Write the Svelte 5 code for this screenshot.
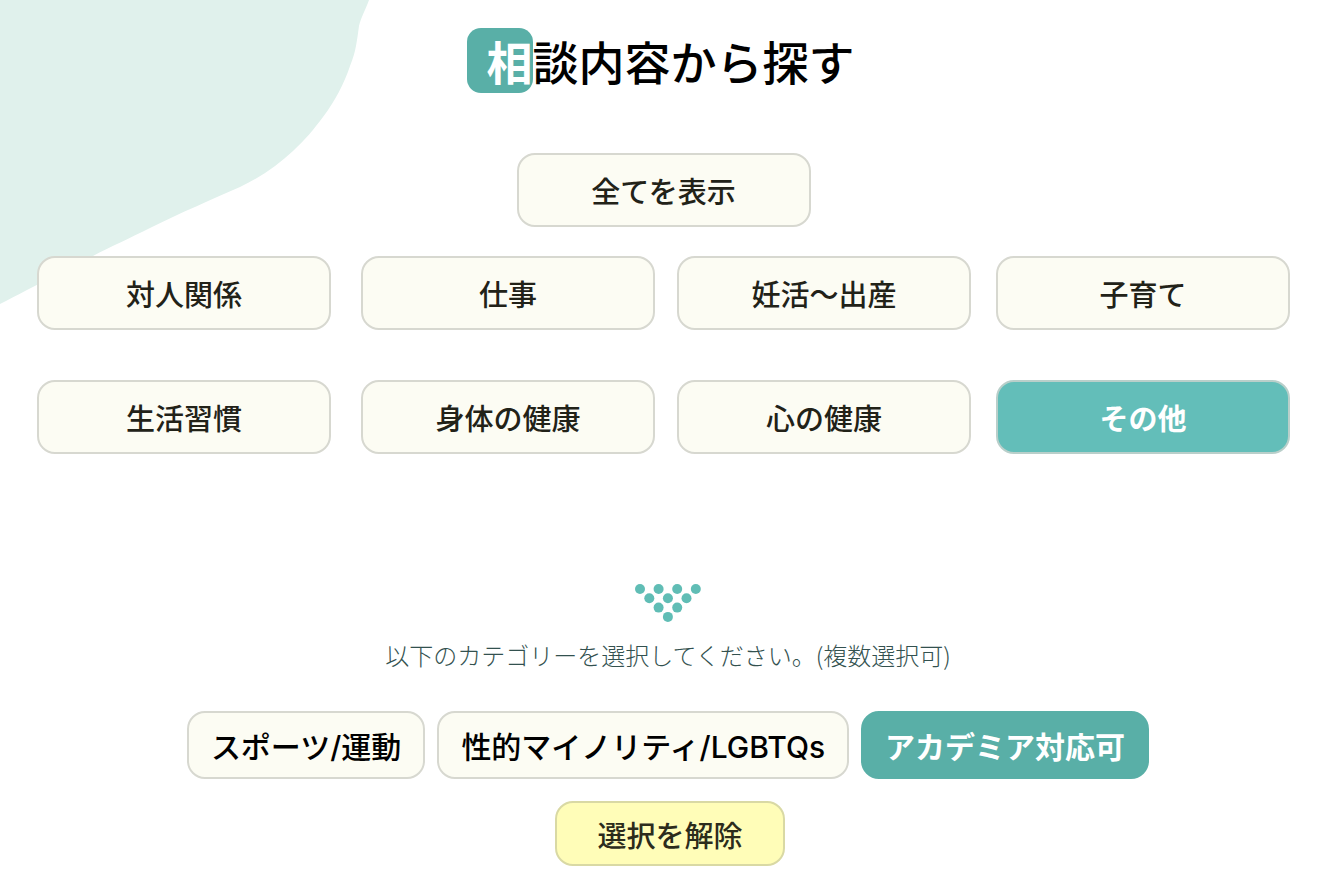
<script>
    let categories = [
        "対人関係",
        "仕事",
        "妊活～出産",
        "子育て",
        "生活習慣",
        "身体の健康",
        "心の健康",
        "その他",
    ];
    let tags = ["スポーツ/運動", "性的マイノリティ/LGBTQs", "アカデミア対応可"];

    let selected = "その他";
    let checked = ["アカデミア対応可"];

    // rows of the dotted arrow, from top to bottom
    let dots = [4, 3, 2, 1].flatMap((count, row) =>
        Array.from({ length: count }, (_, i) => ({
            x: 5 + row * 9.3 + i * 18.6,
            y: 6 + row * 9.3,
        }))
    );

    function toggleTag(tag) {
        checked = checked.includes(tag)
            ? checked.filter((t) => t !== tag)
            : [...checked, tag];
    }
</script>

<main lang="ja">
    <svg class="blob" width="370" height="304" viewBox="0 0 370 304" aria-hidden="true">
        <path
            d="M0 0H369C366 9 361 17 359 26C357 40 356 52 350 66C344 84 335 101 323 117C314 129 305 140 293 151C278 165 261 177 240 187C213 199 180 213 150 228C130 238 110 247 93 256C70 268 35 286 0 304Z"
        />
    </svg>

    <section class="search">
        <h1><span class="initial">相</span>談内容から探す</h1>
        <button
            class="category"
            class:active={selected == "all"}
            aria-pressed={selected == "all"}
            on:click={() => (selected = "all")}>全てを表示</button
        >
        <div class="categories">
            {#each categories as category}
                <button
                    class="category"
                    class:active={selected == category}
                    aria-pressed={selected == category}
                    on:click={() => (selected = category)}>{category}</button
                >
            {/each}
        </div>
    </section>

    <section class="detail">
        <svg class="arrow" width="66" height="40" viewBox="0 0 66 40" aria-hidden="true">
            {#each dots as dot}
                <circle cx={dot.x} cy={dot.y} r="5" />
            {/each}
        </svg>
        <p>以下のカテゴリーを選択してください。(複数選択可)</p>
        <div class="tags">
            {#each tags as tag}
                <button
                    class="tag"
                    class:checked={checked.includes(tag)}
                    aria-pressed={checked.includes(tag)}
                    on:click={() => toggleTag(tag)}>{tag}</button
                >
            {/each}
        </div>
        <button class="clear" on:click={() => (checked = [])}>選択を解除</button>
    </section>
</main>

<style>
    :global(body) {
        margin: 0;
        background: #fff;
    }

    main {
        position: relative;
        font-family: "Noto Sans CJK JP", sans-serif;
        color: #000;
        padding-bottom: 28px;
    }

    .blob {
        position: absolute;
        top: 0;
        left: 0;
        fill: #e0f1ec;
    }

    .search {
        position: relative;
        display: flex;
        flex-direction: column;
        align-items: center;
        padding: 28px 46px 0 37px;
    }

    h1 {
        display: flex;
        align-items: center;
        margin: 0 6px 60px 0;
        font-size: 46px;
        line-height: 65px;
        font-weight: 500;
    }

    .initial {
        padding-left: 20px;
        border-radius: 14px;
        background: #59afa7;
        color: #fff;
        font-weight: 700;
    }

    button {
        box-sizing: border-box;
        margin: 0;
        border: 2px solid #d7d8d0;
        border-radius: 18px;
        background: #fcfcf3;
        font-family: inherit;
        font-size: 29px;
        line-height: 40px;
        font-weight: 500;
        white-space: nowrap;
        cursor: pointer;
    }

    .category {
        width: 294px;
        height: 74px;
        padding: 0;
        color: #222218;
    }

    .category.active {
        background: #63beb9;
        border-color: #b9cfca;
        color: #fff;
        font-weight: 700;
    }

    .categories {
        align-self: stretch;
        display: grid;
        grid-template-columns: 324fr 316fr 319fr 294fr;
        row-gap: 50px;
        margin-top: 29px;
    }

    .detail {
        display: flex;
        flex-direction: column;
        align-items: center;
        padding-top: 129px;
    }

    .arrow {
        fill: #60bdb5;
    }

    p {
        margin: 13px 0 37px;
        font-size: 24px;
        line-height: 38px;
        font-weight: 300;
        color: #33514f;
    }

    .tags {
        display: flex;
        flex-wrap: wrap;
        justify-content: center;
        gap: 12px;
    }

    .tag {
        height: 68px;
        padding: 4px 22px 0;
        font-family: Inter, "Noto Sans CJK JP", sans-serif;
        font-size: 30px;
        color: #000;
    }

    .tag.checked {
        background: #59afa7;
        border-color: #59afa7;
        color: #fff;
        font-weight: 700;
    }

    .clear {
        height: 65px;
        margin: 22px 0 0 4px;
        padding: 0 40px;
        border-color: #d9d9a4;
        background: #fffdb8;
        color: #2c2c1c;
    }
</style>
